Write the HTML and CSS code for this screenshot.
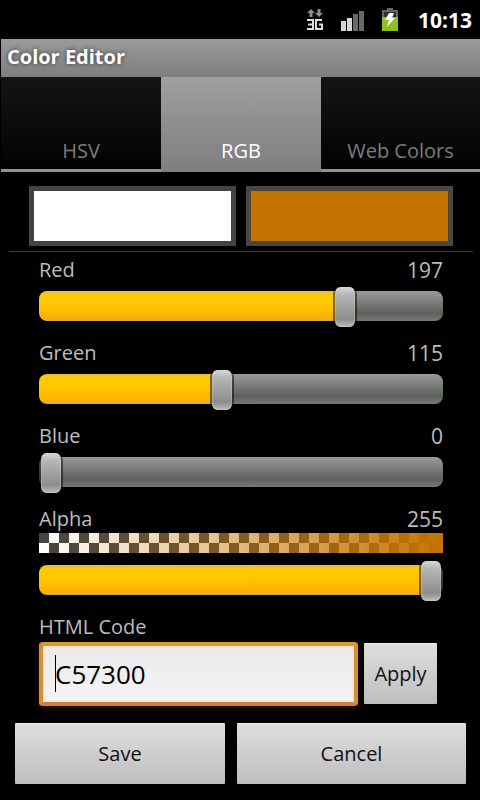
FILE: index.html
```html
<!DOCTYPE html>
<html lang="en">
<head>
<meta charset="utf-8">
<meta name="viewport" content="width=device-width, initial-scale=1">
<title>Color Editor</title>
<link rel="stylesheet" href="styles.css">
</head>
<body>
<div class="status">
  <svg class="icon-network" width="18" height="24" viewBox="0 0 18 24" aria-hidden="true">
    <path fill="#8c8c8c" d="M5 1l4 4H6.500v4h-3V5H1zM11.500 1h3v4H17l-4 4-4-4h2.500z"/>
    <path fill="none" stroke="#dedede" stroke-width="2" d="M1 12h6v9H1M2 16.500h5M16 12h-6v9h6v-4.500h-3"/>
  </svg>
  <svg class="icon-signal" width="24" height="24" viewBox="0 0 24 24" aria-hidden="true">
    <path fill="#d6d6d6" d="M0 13h5v10H0zM6 10h5v13H6z"/>
    <path fill="#6a6a6a" d="M12 6h5v17h-5zM18 3h5v20h-5z"/>
  </svg>
  <svg class="icon-battery" width="18" height="24" viewBox="0 0 18 24" aria-hidden="true">
    <path fill="#666" d="M6 0h6v2h5v21H1V2h5z"/>
    <path fill="#2e2e2e" d="M3 4h12v6H3z"/>
    <path fill="#8fc31c" d="M1 9h16v14H1z"/>
    <path fill="#fff" d="M8 5h5l-2 5h3l-8 9 2-7H4z"/>
  </svg>
  <time class="clock">10:13</time>
</div>
<header class="titlebar"><h1>Color Editor</h1></header>
<nav class="tabs">
  <button type="button" class="tab">HSV</button>
  <button type="button" class="tab tab-active">RGB</button>
  <button type="button" class="tab">Web Colors</button>
</nav>
<main>
  <div class="swatches">
    <div class="swatch swatch-old"></div>
    <div class="swatch swatch-new"></div>
  </div>
  <form>
    <div class="channels">
      <div class="channel">
        <div class="channel-head"><label for="red">Red</label><output for="red">197</output></div>
        <input id="red" type="range" min="0" max="255" value="197" style="--value: 197">
      </div>
      <div class="channel">
        <div class="channel-head"><label for="green">Green</label><output for="green">115</output></div>
        <input id="green" type="range" min="0" max="255" value="115" style="--value: 115">
      </div>
      <div class="channel">
        <div class="channel-head"><label for="blue">Blue</label><output for="blue">0</output></div>
        <input id="blue" type="range" min="0" max="255" value="0" style="--value: 0">
      </div>
      <div class="channel">
        <div class="channel-head"><label for="alpha">Alpha</label><output for="alpha">255</output></div>
        <div class="checker"></div>
        <input id="alpha" type="range" min="0" max="255" value="255" style="--value: 255">
      </div>
      <div class="code">
        <label for="code">HTML Code</label>
        <div class="code-row">
          <div class="field"><input id="code" type="text" value="C57300"><span class="caret"></span></div>
          <button type="button" class="button apply">Apply</button>
        </div>
      </div>
    </div>
    <div class="actions">
      <button type="submit" class="button save">Save</button>
      <button type="button" class="button cancel">Cancel</button>
    </div>
  </form>
</main>
</body>
</html>
```
FILE: styles.css
```css
* { box-sizing: border-box; }

body {
  margin: 0;
  background: #000;
  color: #bdbdbd;
  font: 20px/28px "Open Sans", "Noto Sans", sans-serif;
}

button, input { font: inherit; margin: 0; }

.status {
  display: flex;
  align-items: center;
  justify-content: flex-end;
  height: 39px;
  padding-right: 8px;
}

.icon-network { margin-right: 17px; }
.icon-signal { margin-right: 16px; }
.icon-battery { margin-right: 19px; }

.clock { color: #fff; font-size: 21px; font-weight: bold; }

.titlebar {
  height: 38px;
  margin-left: 1px;
  padding: 4px 6px;
  background: linear-gradient(#9b9b9b, #7e7e7e);
}

.titlebar h1 {
  margin: 0;
  color: #fff;
  font-size: 20px;
  line-height: 28px;
  text-shadow: 0 0 4px #333;
}

.tabs {
  display: grid;
  grid-template-columns: 160fr 160fr 159fr;
  margin-left: 1px;
  border-bottom: 3px solid #929292;
}

.tab {
  height: 92px;
  padding: 56px 0 0;
  border: 0;
  background: linear-gradient(#151515, #020202);
  color: #7c7c7c;
  line-height: 28px;
}

.tab-active {
  height: 95px;
  margin-bottom: -3px;
  padding-bottom: 3px;
  background: linear-gradient(#9f9f9f, #7e7e7e);
  color: #fff;
}

.swatches {
  display: grid;
  grid-template-columns: 1fr 1fr;
  gap: 10px;
  margin: 0 7px 0 9px;
  padding: 14px 20px 5px;
  border-bottom: 1px solid #3c3c3c;
}

.swatch { height: 60px; border: 5px solid #444; }
.swatch-old { background: #fff; }
.swatch-new { background: #c57300; border-color: #4d4540; }

.channels {
  display: grid;
  gap: 12px;
  padding: 4px 37px 0 39px;
}

.channel { display: grid; }

.channel-head { display: flex; justify-content: space-between; }

.channel-head output { font-size: 21px; }

.checker {
  height: 20px;
  margin-bottom: 5px;
  background:
    linear-gradient(to right, transparent, #c57300),
    repeating-conic-gradient(#fff 0 25%, #444 0 50%) 0 0 / 20px 20px;
}

input[type="range"] {
  appearance: none;
  width: 100%;
  height: 40px;
  margin: 2px 0 1px;
  background: none;
}

input[type="range"]::-webkit-slider-runnable-track {
  height: 30px;
  border-radius: 8px;
  background:
    linear-gradient(#e5bd45, #ffcb05 4px, #ffc800 12px, #ffb400 25px, #d9ad3e) 0 0 / calc((100% - 12px) * var(--value) / 255) 100% no-repeat,
    linear-gradient(#999b99, #7e817d 10px, #5d615c 22px, #777a76);
}

input[type="range"]::-webkit-slider-thumb {
  appearance: none;
  width: 24px;
  height: 40px;
  margin-top: -4px;
  border: solid transparent;
  border-width: 0 2px;
  border-radius: 7px;
  background:
    linear-gradient(#d8d8d8, #b5b5b5 8px, #8d8d8d 32px, #bcbcbc) padding-box,
    linear-gradient(rgba(0, 0, 0, 0.5), rgba(0, 0, 0, 0.5)) border-box;
  box-shadow: inset 0 0 2px #ddd;
}

.code label { display: block; }

.code-row { display: flex; gap: 6px; align-items: flex-start; }

.field { position: relative; flex: 1; margin-top: 1px; }

.field input {
  display: block;
  width: 100%;
  height: 64px;
  padding: 0 12px;
  border: 4px solid;
  border-color: #d79b35 #d78c35 #cf8039;
  border-radius: 4px;
  outline: 0;
  background: linear-gradient(#eaeaea, #f3f3f3);
  box-shadow: inset 0 0 2px 1px #ffe2a8, 0 2px 6px #301800;
  color: #000;
  caret-color: transparent;
  font-size: 26px;
}

.caret {
  position: absolute;
  top: 13px;
  left: 16px;
  width: 1px;
  height: 37px;
  background: #000;
}

.button {
  height: 61px;
  padding: 0;
  border: 0;
  border-top: 1px solid #eee;
  border-radius: 1px;
  background: linear-gradient(#dedede, #bebebe);
  color: #111;
}

.apply { width: 73px; margin: 2px 6px 0 0; }

.actions {
  display: grid;
  grid-template-columns: 210fr 229fr;
  gap: 12px;
  padding: 17px 14px 0 15px;
}
```
